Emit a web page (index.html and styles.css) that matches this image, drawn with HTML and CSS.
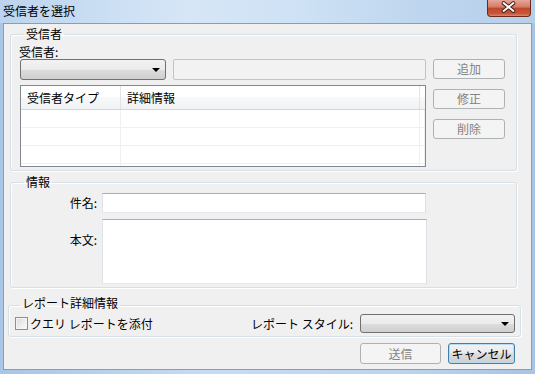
FILE: index.html
```html
<!DOCTYPE html>
<html lang="ja">

<head>
    <meta charset="UTF-8">
    <title>受信者を選択</title>
    <link rel="stylesheet" href="styles.css">
</head>

<body>
    <div class="window">
        <div class="titlebar">
            <span class="title">受信者を選択</span>
            <div class="close">
                <svg width="44" height="17" viewBox="0 0 44 17">
                    <path d="M17 4 L27 12 M27 4 L17 12" stroke="#4a1d16" stroke-width="4" stroke-linecap="round" fill="none" />
                    <path d="M17 4 L27 12 M27 4 L17 12" stroke="#ffffff" stroke-width="2" stroke-linecap="round" fill="none" />
                </svg>
            </div>
        </div>

        <div class="client">
            <!-- 受信者 -->
            <fieldset class="group g1">
                <legend>受信者</legend>
                <div class="lbl">受信者:</div>
                <div class="recip">
                    <div class="toprow">
                        <div class="combo c1"><span class="arrow"></span></div>
                        <div class="field-off"></div>
                    </div>
                    <button class="btn" disabled>追加</button>

                    <div class="list">
                        <div class="lrow head">
                            <div class="cell">受信者タイプ</div>
                            <div class="cell">詳細情報</div>
                            <div class="cell"></div>
                        </div>
                        <div class="lrow"><div class="cell"></div><div class="cell"></div><div class="cell"></div></div>
                        <div class="lrow"><div class="cell"></div><div class="cell"></div><div class="cell"></div></div>
                        <div class="lrow"><div class="cell"></div><div class="cell"></div><div class="cell"></div></div>
                        <div class="lrow"><div class="cell"></div><div class="cell"></div><div class="cell"></div></div>
                    </div>
                    <div class="sidebtns">
                        <button class="btn" disabled>修正</button>
                        <button class="btn" disabled>削除</button>
                    </div>
                </div>
            </fieldset>

            <!-- 情報 -->
            <fieldset class="group g2">
                <legend>情報</legend>
                <div class="info">
                    <div class="flbl">件名:</div>
                    <div class="textbox subj"></div>
                    <div class="flbl top">本文:</div>
                    <div class="textbox body"></div>
                </div>
            </fieldset>

            <!-- レポート詳細情報 -->
            <fieldset class="group g3">
                <legend>レポート詳細情報</legend>
                <div class="reprow">
                    <span class="chk"></span>
                    <span class="chklbl">クエリ レポートを添付</span>
                    <span class="stylelbl">レポート スタイル:</span>
                    <div class="combo c2"><span class="arrow"></span></div>
                </div>
            </fieldset>

            <div class="footer">
                <button class="btn send" disabled>送信</button>
                <button class="btn cancel">キャンセル</button>
            </div>
        </div>
    </div>
</body>

</html>
```

FILE: styles.css
```css
* {
    box-sizing: border-box;
}

body {
    margin: 0;
    font-family: "Noto Sans CJK JP", sans-serif;
    font-size: 12px;
    color: #000;
}

.window {
    width: 535px;
    height: 374px;
    background: linear-gradient(90deg, #a9c6e6, #c6dcf2 40%, #bcd4ee 75%, #a8c4e4);
    display: flex;
    flex-direction: column;
}

/* タイトルバー */
.titlebar {
    height: 23px;
    display: flex;
    align-items: flex-start;
    padding-left: 3px;
    background: linear-gradient(90deg, #bcd4ee, #d6e6f7 35%, #cfe2f5 55%, #bdd5ee 80%, #b7d0ea);
}

.title {
    line-height: 14px;
    margin-top: 4px;
}

.close {
    margin-left: auto;
    margin-right: 4px;
    width: 44px;
    height: 17px;
    border: 1px solid #6b2a20;
    border-top: none;
    border-radius: 0 0 4px 4px;
    background: linear-gradient(#e6a698, #d37a66 45%, #c0452b 50%, #c8563a 85%, #dd8a6b);
    display: flex;
}

.close svg {
    margin: -1px 0 0 -1px;
}

/* クライアント */
.client {
    margin: 0 3px;
    height: 347px;
    background: #f0f0f0;
    border: 1px solid #8e9cab;
    padding: 3px 0 0 6px;
}

.group {
    margin: 0;
    padding: 4px 8px 3px 8px;
    border: 1px solid #d5dfe5;
    border-radius: 3px;
    box-shadow: 1px 1px 0 #fff, inset 1px 1px 0 #fff;
    min-width: 0;
}

.group legend {
    padding: 0 2px;
    margin-left: 5px;
    line-height: 14px;
}

.g1 {
    width: 507px;
}

.lbl {
    line-height: 14px;
}

.recip {
    display: grid;
    grid-template-columns: 407px 72px;
    column-gap: 7px;
    row-gap: 5px;
    align-items: start;
}

.toprow {
    display: flex;
    gap: 7px;
    padding-left: 1px;
}

.combo {
    height: 21px;
    border: 1px solid #707070;
    border-radius: 3px;
    background: linear-gradient(#f2f2f2, #ebebeb 50%, #dddddd 50%, #cfcfcf);
    display: flex;
    align-items: center;
    justify-content: flex-end;
    padding-right: 5px;
}

.c1 {
    width: 146px;
}

.arrow {
    width: 0;
    height: 0;
    border-left: 4px solid transparent;
    border-right: 4px solid transparent;
    border-top: 4px solid #000;
}

.field-off {
    width: 254px;
    height: 21px;
    border: 1px solid #c3c3c3;
    border-radius: 2px;
    background: #f2f2f2;
}

.btn {
    font-family: inherit;
    font-size: 12px;
    width: 72px;
    height: 20px;
    padding: 0;
    border: 1px solid #adb2b5;
    border-radius: 3px;
    background: #f4f4f4;
    color: #838383;
    line-height: 14px;
}

.list {
    width: 406px;
    height: 82px;
    margin-left: 1px;
    border: 1px solid #828790;
    background: #fff;
    overflow: hidden;
}

.lrow {
    display: grid;
    grid-template-columns: 100px 299px 1fr;
    height: 18px;
    border-bottom: 1px solid #f0f0f0;
}

.lrow .cell {
    border-right: 1px solid #f0f0f0;
}

.lrow.head {
    height: 24px;
    border-bottom: 1px solid #d5d5d5;
    background: linear-gradient(#ffffff, #ffffff 50%, #f7f8fa 50%, #f1f2f4);
}

.lrow.head .cell {
    border-right: 1px solid #e2e3e5;
    padding: 5px 0 0 6px;
    line-height: 14px;
}

.sidebtns {
    display: flex;
    flex-direction: column;
    gap: 10px;
    margin-top: 4px;
}

/* 情報 */
.g2 {
    width: 507px;
    margin-top: 4px;
}

.info {
    display: grid;
    grid-template-columns: 78px 324px;
    column-gap: 5px;
    row-gap: 6px;
    align-items: center;
}

.flbl {
    text-align: right;
    line-height: 14px;
}

.flbl.top {
    align-self: start;
    margin-top: 14px;
}

.textbox {
    background: #fff;
    border: 1px solid;
    border-color: #abadb3 #dbdfe6 #e3e9ef #e2e3ea;
}

.subj {
    height: 20px;
}

.body {
    height: 65px;
    width: 325px;
}

/* レポート詳細情報 */
.g3 {
    width: 513px;
    margin: 8px 0 0 -2px;
    padding: 0 5px 3px 6px;
}

.g3 legend {
    padding-bottom: 4px;
}

.reprow {
    display: flex;
    align-items: center;
}

.chk {
    width: 13px;
    height: 13px;
    border: 1px solid #8e8f8f;
    background: linear-gradient(135deg, #dcdcdc, #fbfbfb);
    box-shadow: inset 0 0 0 1px #f4f4f4;
}

.chklbl {
    margin-left: 2px;
    line-height: 14px;
}

.stylelbl {
    margin-left: auto;
    margin-right: 7px;
    line-height: 14px;
}

.c2 {
    width: 155px;
    height: 19px;
}

/* ボタン */
.footer {
    display: flex;
    justify-content: flex-end;
    gap: 7px;
    margin-top: 6px;
    padding-right: 16px;
}

.footer .btn {
    height: 21px;
}

.send {
    width: 81px;
}

.cancel {
    width: 67px;
    color: #000;
    border-color: #3c7fb1;
    background: linear-gradient(#f2f2f2, #ebebeb 50%, #dddddd 50%, #cfcfcf);
    box-shadow: inset 0 0 0 1px #b9dcf3;
}
```
